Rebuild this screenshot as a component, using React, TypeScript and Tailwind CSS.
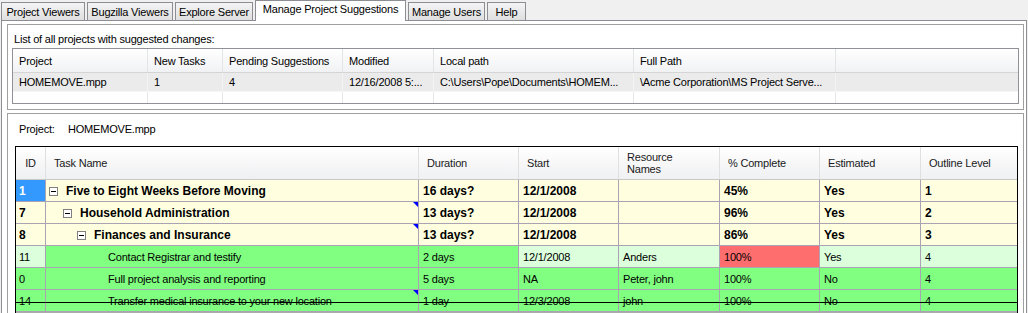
import React from "react";

/*
  Manage Project Suggestions tab: project list on top, task grid for the
  selected project below. Colours follow the suggestion state of each cell.
*/

type Tone = "yellow" | "green" | "light" | "red" | "blue";

const toneClass: Record<Tone, string> = {
  yellow: "bg-[#ffffe0]",
  green: "bg-[#80ff80]",
  light: "bg-[#dcffdc]",
  red: "bg-[#ff6e6e]",
  blue: "bg-[#3399ff] text-white",
};

const tabs = [
  { label: "Project Viewers", w: "w-[84px]" },
  { label: "Bugzilla Viewers", w: "w-[86px]" },
  { label: "Explore Server", w: "w-[78px]" },
  { label: "Manage Project Suggestions", w: "w-[151px]", active: true },
  { label: "Manage Users", w: "w-[77px]" },
  { label: "Help", w: "w-[39px]" },
];

const listCols = [
  { label: "Project", value: "HOMEMOVE.mpp", w: "w-[135px]" },
  { label: "New Tasks", value: "1", w: "w-[75px]" },
  { label: "Pending Suggestions", value: "4", w: "w-[120px]" },
  { label: "Modified", value: "12/16/2008 5:...", w: "w-[91px]" },
  { label: "Local path", value: "C:\\Users\\Pope\\Documents\\HOMEM...", w: "w-[200px]" },
  { label: "Full Path", value: "\\Acme Corporation\\MS Project Serve...", w: "w-[202px]" },
];

const gridCols = "grid grid-cols-[30px_373px_100px_100px_101px_100px_101px_96px]";

const gridHead = [
  "ID",
  "Task Name",
  "Duration",
  "Start",
  "Resource Names",
  "% Complete",
  "Estimated",
  "Outline Level",
];

interface Task {
  id: string;
  name: string;
  level: 1 | 2 | 3 | 4;
  bold?: boolean;
  marker?: boolean;
  strike?: boolean;
  values: string[];
  tones: Tone[];
}

const Y: Tone = "yellow";
const G: Tone = "green";
const L: Tone = "light";

const tasks: Task[] = [
  {
    id: "1",
    name: "Five to Eight Weeks Before Moving",
    level: 1,
    bold: true,
    values: ["16 days?", "12/1/2008", "", "45%", "Yes", "1"],
    tones: ["blue", Y, Y, Y, Y, Y, Y, Y],
  },
  {
    id: "7",
    name: "Household Administration",
    level: 2,
    bold: true,
    marker: true,
    values: ["13 days?", "12/1/2008", "", "96%", "Yes", "2"],
    tones: [Y, Y, Y, Y, Y, Y, Y, Y],
  },
  {
    id: "8",
    name: "Finances and Insurance",
    level: 3,
    bold: true,
    marker: true,
    values: ["13 days?", "12/1/2008", "", "86%", "Yes", "3"],
    tones: [Y, Y, Y, Y, Y, Y, Y, Y],
  },
  {
    id: "11",
    name: "Contact Registrar and testify",
    level: 4,
    values: ["2 days", "12/1/2008", "Anders", "100%", "Yes", "4"],
    tones: [L, G, G, L, L, "red", L, L],
  },
  {
    id: "0",
    name: "Full project analysis and reporting",
    level: 4,
    values: ["5 days", "NA", "Peter, john", "100%", "No", "4"],
    tones: [G, G, G, G, G, G, G, G],
  },
  {
    id: "14",
    name: "Transfer medical insurance to your new location",
    level: 4,
    marker: true,
    strike: true,
    values: ["1 day", "12/3/2008", "john", "100%", "No", "4"],
    tones: [G, G, G, G, G, G, G, G],
  },
];

const indent: Record<number, string> = {
  1: "pl-[3px]",
  2: "pl-[17px]",
  3: "pl-[31px]",
  4: "pl-[62px]",
};

function TreeBox() {
  return (
    <span className="flex h-[9px] w-[9px] shrink-0 items-center justify-center border border-[#808080] bg-white">
      <span className="h-px w-[5px] bg-black" />
    </span>
  );
}

function TaskRow({ task }: { task: Task }) {
  const cells = [task.id, task.name, ...task.values];
  return (
    <div
      className={`relative ${gridCols} ${
        task.bold ? "text-[12px] font-bold tracking-normal" : ""
      }`}
    >
      {cells.map((v, i) => (
        <div
          key={i}
          className={`relative flex h-[22px] items-center overflow-hidden whitespace-nowrap border-b border-[#a9a3b4] pt-px ${
            i < 7 ? "border-r" : ""
          } ${toneClass[task.tones[i]]} ${i === 0 ? "pl-[3px]" : i === 1 ? "" : "px-[4px]"}`}
        >
          {i === 1 ? (
            <div className={`flex items-center ${indent[task.level]}`}>
              {task.level < 4 && <TreeBox />}
              <span className={task.level < 4 ? "ml-[8px]" : ""}>{v}</span>
            </div>
          ) : (
            v
          )}
          {i === 1 && task.marker && (
            <span className="absolute right-0 top-0 h-0 w-0 border-l-[5px] border-t-[5px] border-l-transparent border-t-[#0000ff]" />
          )}
        </div>
      ))}
      {task.strike && (
        <div className="absolute -left-px -right-px top-[12px] h-px bg-black" />
      )}
    </div>
  );
}

function ProjectList() {
  return (
    <div className="ml-[4px] mt-[2px] w-[1007px] border border-[#8f9196] bg-white">
      <div className="flex h-[24px] border-b border-[#d5d5d5] bg-linear-to-b from-white to-[#f1f2f4]">
        {listCols.map((c) => (
          <div
            key={c.label}
            className={`${c.w} flex items-center border-r border-[#e3e4e6] pl-[6px] pt-[2px]`}
          >
            {c.label}
          </div>
        ))}
        <div className="flex-1" />
      </div>
      <div className="flex h-[19px] border-b border-[#f6f6f6] bg-[#ebebeb]">
        {listCols.map((c) => (
          <div
            key={c.label}
            className={`${c.w} flex items-center whitespace-nowrap border-r border-[#f4f4f4] pl-[6px] pt-px`}
          >
            {c.value}
          </div>
        ))}
        <div className="flex-1" />
      </div>
      <div className="flex h-[11px]">
        {listCols.map((c) => (
          <div key={c.label} className={`${c.w} border-r border-[#e6e6e6]`} />
        ))}
      </div>
    </div>
  );
}

function TaskGrid() {
  return (
    <div className="ml-[7px] mt-[10px] w-[1003px] border-x border-t border-black bg-[#ababab]">
      <div
        className={`${gridCols} h-[33px] border-b border-[#c8c8c8] bg-linear-to-b from-white to-[#eff0f2] text-[#1a1a1a]`}
      >
        {gridHead.map((h, i) => (
          <div
            key={h}
            className={`flex items-center border-[#e0e0e0] ${i < 7 ? "border-r" : ""} ${
              i === 0 ? "justify-center" : "pl-[8px]"
            }`}
          >
            {i === 4 ? (
              <span className="w-[60px] whitespace-normal leading-[12px]">{h}</span>
            ) : (
              h
            )}
          </div>
        ))}
      </div>
      {tasks.map((t) => (
        <TaskRow key={t.id} task={t} />
      ))}
      <div className="h-[10px]" />
    </div>
  );
}

export default function App() {
  return (
    <div className="flex h-[313px] w-[1028px] flex-col overflow-hidden bg-[#f0f0f0] font-['Liberation_Sans',Arial,sans-serif] text-[11px] leading-[13px] tracking-[-0.2px] text-black">
      <div className="flex h-[20px] items-start gap-[2px] pl-[1px]">
        {tabs.map((t) =>
          t.active ? (
            <div
              key={t.label}
              className={`${t.w} relative z-10 h-[21px] border-x border-t border-[#8c8e94] bg-white pt-[2px] text-center`}
            >
              {t.label}
            </div>
          ) : (
            <div
              key={t.label}
              className={`${t.w} mt-[2px] flex h-[18px] items-center justify-center border-x border-t border-[#8c8e94] bg-linear-to-b from-[#f4f4f4] to-[#dfdfdf] pt-px`}
            >
              {t.label}
            </div>
          )
        )}
      </div>
      <div className="ml-[1px] w-[1026px] flex-1 border border-[#8c8e94] bg-white pl-[5px] pt-[3px]">
        <div className="w-[1017px] border border-[#a0a0a0] pb-[5px] pt-[8px]">
          <div className="pl-[6px]">List of all projects with suggested changes:</div>
          <ProjectList />
        </div>
        <div className="mt-[3px] w-[1017px] border border-[#a0a0a0] pt-[9px]">
          <div className="flex pl-[11px]">
            <span className="w-[49px]">Project:</span>
            <span>HOMEMOVE.mpp</span>
          </div>
          <TaskGrid />
        </div>
      </div>
    </div>
  );
}
